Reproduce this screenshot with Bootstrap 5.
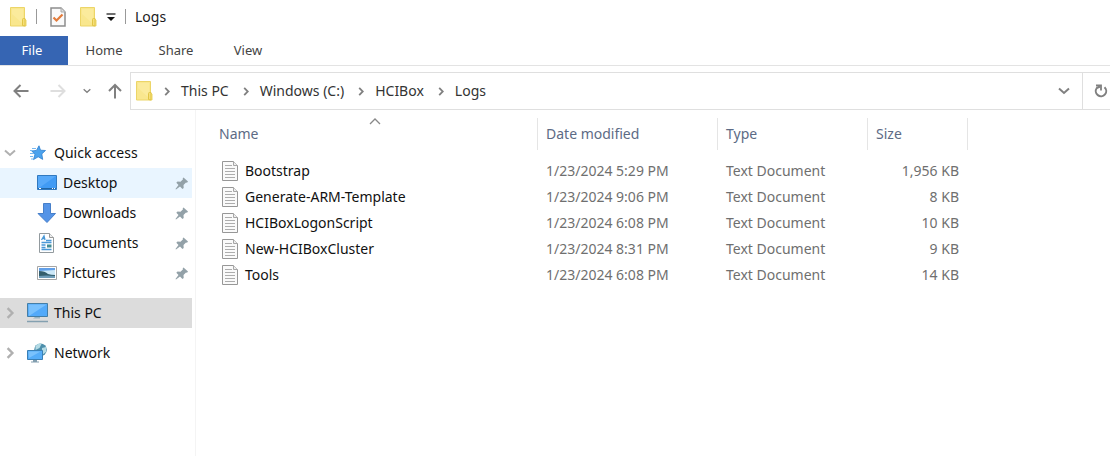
<!DOCTYPE html>
<html lang="en">
<head>
<meta charset="utf-8">
<meta name="viewport" content="width=device-width, initial-scale=1">
<title>Logs</title>
<link href="https://cdn.jsdelivr.net/npm/bootstrap@5.3.0/dist/css/bootstrap.min.css" rel="stylesheet">
<style>
body { font-family: "Segoe UI", "Noto Sans", sans-serif; font-size: 14px; line-height: 20px; color: #1a1a1a; background: #fff; }
svg { display: block; flex: none; }
button { border: 0; background: none; padding: 0; color: inherit; }
a { color: inherit; text-decoration: none; }
.titlebar { height: 36px; padding: 0 9px 3px; gap: 9px; }
.divider { width: 1px; height: 15px; background: #999; }
.ribbon { border-bottom: 1px solid #e3e3e3; height: 30px; }
.ribbon .nav-link { color: #444; padding: 4px 0; line-height: 21px; border-radius: 0; font-size: 13px; text-align: center; width: 72px; }
.ribbon .nav-link.active { background: #3665b3; color: #fff; width: 68px; padding-right: 4px; }
.addressrow { margin-top: 6px; color: #808080; }
.history { padding: 0 8px 0 13px; gap: 17px; }
.address { border: 1px solid #dfdfdf; border-right: 0; height: 38px; }
.crumbs { gap: 11px; padding-left: 4px; }
.crumbs a { color: #333; margin-right: 3px; }
.refresh { border-left: 1px solid #dfdfdf; width: 28px; padding-left: 11px; }
.sidebar { width: 196px; border-right: 1px solid #f4f4f4; padding: 28px 3px 0 0; min-height: calc(100vh - 110px); color: #111; }
.item { height: 30px; padding-left: 4px; gap: 6px; }
.item.sub { padding: 0 3px 0 36px; }
.item.hovered { background: #e9f5ff; }
.item.selected { background: #dcdcdc; }
.item.root { margin-top: 10px; }
.twist { width: 12px; color: #b0b0b0; margin-right: 4px; }
.files { width: 757px; table-layout: fixed; border-collapse: separate; border-spacing: 0; margin: 8px 0 0 15px; color: #6f6f6f; }
.files th { height: 32px; font-weight: 400; color: #5d6b85; border-right: 1px solid #e5e5e5; padding: 0 8px; position: relative; }
.files td { height: 26px; padding: 0 9px 0 8px; white-space: nowrap; }
.files tbody::before { content: ""; display: block; height: 8px; }
.files td:first-child { color: #111; padding-left: 11px; }
.filename { gap: 7px; }
.sort { position: absolute; right: 156px; top: 0; }
.c-name { width: 327px; } .c-date { width: 180px; } .c-type { width: 150px; } .c-size { width: 100px; }
</style>
<script src="https://cdn.jsdelivr.net/npm/bootstrap@5.3.0/dist/js/bootstrap.bundle.min.js"></script>
</head>
<body>
<svg class="d-none" aria-hidden="true">
  <symbol id="folder" viewBox="0 0 18 20"><path d="M1.500 .5h14v11.500l1.500 1v6h-15.500z" fill="#f9e78e" stroke="#ecd568"/><path d="M3 2h11v15l-11-10z" fill="#fbeea5" opacity=".6"/><path d="M13.500 18.500v-6q0-1 1-1h1.500v7.500z" fill="#f6df79" stroke="#e1c545"/></symbol>
  <symbol id="right" viewBox="0 0 6 10"><path d="M1 1l4 4-4 4" fill="none" stroke="currentColor" stroke-width="2"/></symbol>
  <symbol id="down" viewBox="0 0 12 8"><path d="M1 1.500l5 4.500 5-4.500" fill="none" stroke="currentColor" stroke-width="2"/></symbol>
  <symbol id="arrow" viewBox="0 0 16 14"><path d="M15.500 7H2M7.500 1L1.500 7l6 6" fill="none" stroke="currentColor" stroke-width="2"/></symbol>
  <symbol id="pin" viewBox="0 0 14 14"><path d="M8.500 1.500l4.500 4-1 1.200-1-.3-2.500 2.500.2 3-1.200 1L5 10.500 1 13.500.5 13l3-4L1.300 6.700l1.200-1.200 3 .2L8 3.200 7.700 2.300z" fill="#93a1a8"/></symbol>
  <symbol id="text" viewBox="0 0 16 20"><path d="M.5.500h11l4 4v15H.5z" fill="#fafafa" stroke="#979797"/><path d="M11.500.500v4h4" fill="#eee" stroke="#a7a7a7"/><path d="M3 4.500h7M3 7.500h10M3 10.500h10M3 13.500h10M3 16.500h10" stroke="#adadad"/></symbol>
</svg>

<header>
  <div class="titlebar d-flex align-items-center">
    <svg width="18" height="20"><use href="#folder"/></svg>
    <span class="divider"></span>
    <button class="ms-1" aria-label="Properties"><svg width="16" height="20" viewBox="0 0 16 20"><path d="M1 1h10l4 4v14H1z" fill="#fafafa" stroke="#8d8d8d" stroke-width="1.500"/><path d="M11 1v4h4" fill="#ddd" stroke="#aaa"/><path d="M3.500 10.500l3 3 6-6" fill="none" stroke="#e27b3b" stroke-width="2.200"/></svg></button>
    <button class="ms-1" aria-label="New folder"><svg width="18" height="20"><use href="#folder"/></svg></button>
    <button aria-label="Customize Quick Access Toolbar"><svg width="10" height="10" viewBox="0 0 10 10"><path d="M.5 2h9" stroke="#222" stroke-width="1.300"/><path d="M1 5h8L5 9z" fill="#111"/></svg></button>
    <span class="divider"></span>
    <span>Logs</span>
  </div>
  <nav class="ribbon nav" aria-label="Ribbon">
    <a class="nav-link active" href="#">File</a>
    <a class="nav-link" href="#">Home</a>
    <a class="nav-link" href="#">Share</a>
    <a class="nav-link" href="#">View</a>
  </nav>
  <div class="addressrow d-flex align-items-center">
    <div class="history d-flex align-items-center">
      <button class="me-1" aria-label="Back"><svg width="16" height="14"><use href="#arrow"/></svg></button>
      <button aria-label="Forward" disabled><svg width="16" height="14" viewBox="0 0 16 14"><path d="M.5 7H14M8.500 1l6 6-6 6" fill="none" stroke="#dedede" stroke-width="2"/></svg></button>
      <button aria-label="Recent locations"><svg width="8" height="6"><use href="#down"/></svg></button>
      <button aria-label="Up"><svg width="14" height="16" viewBox="0 0 14 16"><path d="M7 15.500V2M1 8l6-6 6 6" fill="none" stroke="currentColor" stroke-width="2"/></svg></button>
    </div>
    <div class="address d-flex align-items-center flex-grow-1">
      <nav class="crumbs d-flex align-items-center flex-grow-1" aria-label="Address">
        <svg width="18" height="20"><use href="#folder"/></svg>
        <svg width="6" height="9"><use href="#right"/></svg>
        <a href="#">This PC</a>
        <svg width="6" height="9"><use href="#right"/></svg>
        <a href="#">Windows (C:)</a>
        <svg width="6" height="9"><use href="#right"/></svg>
        <a href="#">HCIBox</a>
        <svg width="6" height="9"><use href="#right"/></svg>
        <a href="#">Logs</a>
      </nav>
      <button class="pe-2 me-1" aria-label="Previous locations"><svg width="12" height="8"><use href="#down"/></svg></button>
      <button class="refresh d-flex align-items-center align-self-stretch" aria-label="Refresh"><svg width="14" height="14" viewBox="0 0 14 14"><path d="M10.500 3.200A5.200 5.200 0 1 1 2.800 4L6 2.500" fill="none" stroke="currentColor" stroke-width="2"/><path d="M2 1.500H7v5" fill="none" stroke="currentColor" stroke-width="1.800"/></svg></button>
    </div>
  </div>
</header>

<div class="d-flex">
  <nav class="sidebar flex-shrink-0" aria-label="Navigation pane">
    <a class="item d-flex align-items-center" href="#">
      <svg class="twist" height="8"><use href="#down"/></svg>
      <svg width="22" height="16" viewBox="-4 0 22 16"><path d="M9 .8l1.500 4.400 5 .3-3.700 3.400.9 5.500-4.500-2.600-4.700 2.800 1.500-5.400L1.700 6l4.800-.6z" fill="#4ba2ed" stroke="#2c7fd0" stroke-width=".8"/><path d="M0 5.500h3M0 8.500h4M0 11.500h3M2 3.500h4M1 14h2" stroke="#76b8f0"/></svg>
      <span>Quick access</span>
    </a>
    <a class="item sub hovered d-flex align-items-center" href="#">
      <svg width="21" height="16" viewBox="0 0 21 16"><path d="M1.500.500h19v14h-19z" fill="#419bf4" stroke="#3179bf"/><path d="M2 1h18L3 13H2z" fill="#65b2fb" opacity=".6"/><path d="M2 13.500h18" stroke="#2166a5"/><path d="M3 13.500h2M16 13.500h1M18 13.500h1" stroke="#fff"/></svg>
      <span class="me-auto">Desktop</span><svg width="14" height="14"><use href="#pin"/></svg>
    </a>
    <a class="item sub d-flex align-items-center" href="#">
      <svg width="21" height="20" viewBox="0 0 21 20"><path d="M7.500.500h7v10h5L11 19.500 2 10.500h5.500z" fill="#5594e7" stroke="#477fc9"/></svg>
      <span class="me-auto">Downloads</span><svg width="14" height="14"><use href="#pin"/></svg>
    </a>
    <a class="item sub d-flex align-items-center" href="#">
      <svg width="21" height="20" viewBox="0 0 21 20"><path d="M3.500.500h10l4 4v15h-14z" fill="#fff" stroke="#929a9e"/><path d="M13.500.500v4h4" fill="#eee" stroke="#999"/><path d="M5.500 7L8 3l1 4M6 5.500h3M10 7.500h5.500M5.500 9.500h10M5.500 12h4M5.500 14.500h4M5.500 16.500h10" fill="none" stroke="#4998d7" stroke-width="1.300"/><path d="M11 11.500h4.500v3H11z" fill="#438c94"/></svg>
      <span class="me-auto">Documents</span><svg width="14" height="14"><use href="#pin"/></svg>
    </a>
    <a class="item sub d-flex align-items-center" href="#">
      <svg width="21" height="16" viewBox="0 0 21 16"><path d="M1.500 1.500h19v13h-19z" fill="#fff" stroke="#a5a5a5"/><path d="M3 3h16v10H3z" fill="#cce8f8"/><path d="M3 3h16v2L3 6z" fill="#619fe8"/><path d="M3 6q6 0 9 3 3 1 7 1v3H3z" fill="#345e6c"/><path d="M3 11q7-1 16 0v2H3z" fill="#6e9cb8"/></svg>
      <span class="me-auto">Pictures</span><svg width="14" height="14"><use href="#pin"/></svg>
    </a>
    <a class="item root selected d-flex align-items-center" href="#">
      <svg class="twist" height="12"><use href="#right"/></svg>
      <svg width="22" height="20" viewBox="0 0 22 20"><path d="M1.500.500h20v13h-20z" fill="#53aafa" stroke="#457ea6"/><path d="M2.500 1.500h18L3 13z" fill="#8acbfe" opacity=".7"/><path d="M9 14h5v1.500H7z" fill="#9ab4c2"/><path d="M1 18.500h21" stroke="#84a0b0" stroke-width="1.500"/></svg>
      <span>This PC</span>
    </a>
    <a class="item root d-flex align-items-center" href="#">
      <svg class="twist" height="12"><use href="#right"/></svg>
      <svg width="22" height="20" viewBox="-1 0 22 20"><circle cx="13.500" cy="6.800" r="6.300" fill="#4d8fab"/><path d="M8.500 3q4-4 6-2l-2 4-4 2zM15 5l4-1v5l-4 3z" fill="#b4dbe5"/><path d="M.5 7.500h15v9H.5z" fill="#55adf8" stroke="#397fb5"/><path d="M1.500 8.500h12L2 15z" fill="#8acbfe" opacity=".7"/><path d="M6 17h4v1.500h2v1H4v-1h2z" fill="#829eaf"/></svg>
      <span>Network</span>
    </a>
  </nav>

  <main class="flex-grow-1 overflow-hidden">
    <table class="files">
      <colgroup><col class="c-name"><col class="c-date"><col class="c-type"><col class="c-size"></colgroup>
      <thead><tr>
        <th scope="col">Name<svg class="sort" width="12" height="7" viewBox="0 0 12 7"><path d="M1 6l5-5 5 5" fill="none" stroke="#888" stroke-width="1.300"/></svg></th>
        <th scope="col">Date modified</th><th scope="col">Type</th><th scope="col">Size</th>
      </tr></thead>
      <tbody>
        <tr><td><div class="filename d-flex align-items-center"><svg width="16" height="20"><use href="#text"/></svg>Bootstrap</div></td><td>1/23/2024 5:29 PM</td><td>Text Document</td><td class="text-end">1,956 KB</td></tr>
        <tr><td><div class="filename d-flex align-items-center"><svg width="16" height="20"><use href="#text"/></svg>Generate-ARM-Template</div></td><td>1/23/2024 9:06 PM</td><td>Text Document</td><td class="text-end">8 KB</td></tr>
        <tr><td><div class="filename d-flex align-items-center"><svg width="16" height="20"><use href="#text"/></svg>HCIBoxLogonScript</div></td><td>1/23/2024 6:08 PM</td><td>Text Document</td><td class="text-end">10 KB</td></tr>
        <tr><td><div class="filename d-flex align-items-center"><svg width="16" height="20"><use href="#text"/></svg>New-HCIBoxCluster</div></td><td>1/23/2024 8:31 PM</td><td>Text Document</td><td class="text-end">9 KB</td></tr>
        <tr><td><div class="filename d-flex align-items-center"><svg width="16" height="20"><use href="#text"/></svg>Tools</div></td><td>1/23/2024 6:08 PM</td><td>Text Document</td><td class="text-end">14 KB</td></tr>
      </tbody>
    </table>
  </main>
</div>
</body>
</html>
